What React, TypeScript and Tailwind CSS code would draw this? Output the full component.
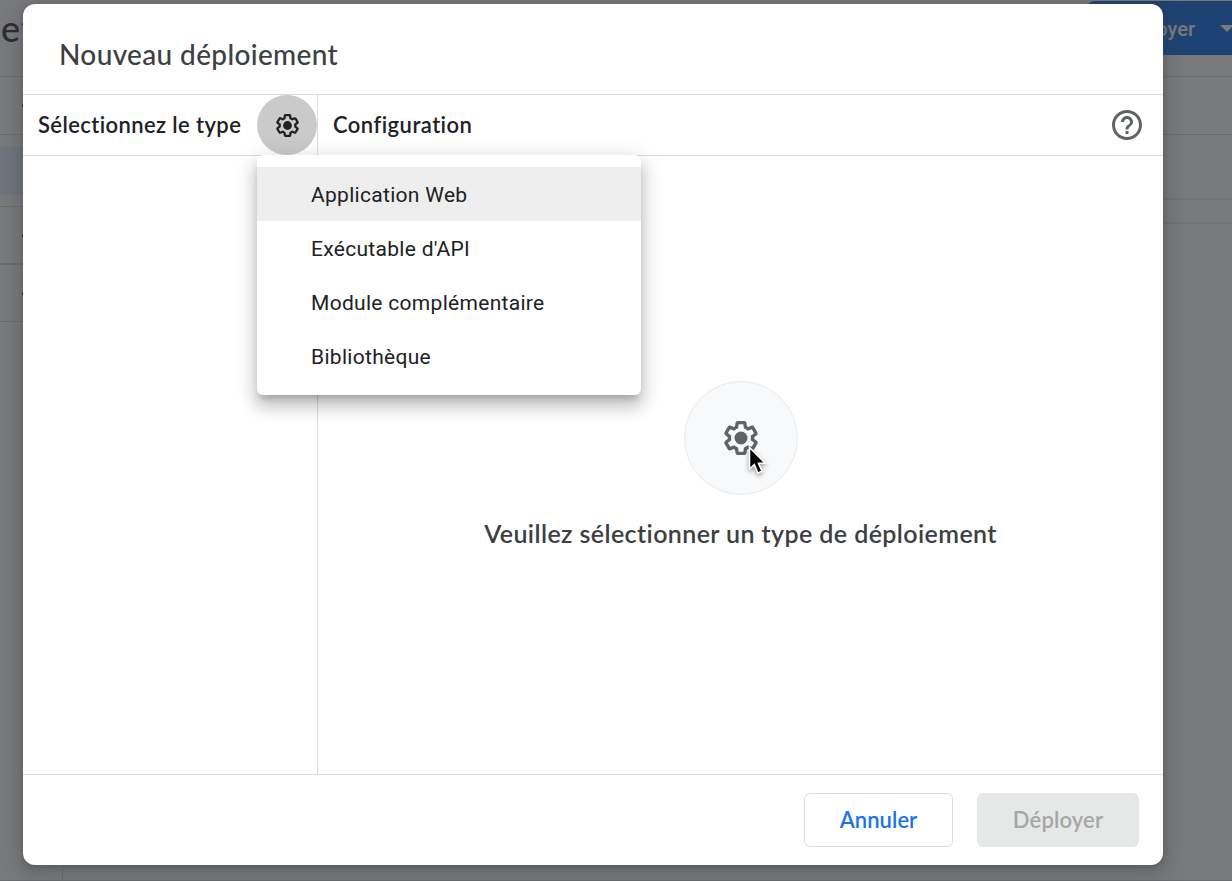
import React from "react";

const sans = "font-['Lato','Open_Sans',sans-serif]";

function GearIcon({ className }: { className: string }) {
  return (
    <svg viewBox="0 0 24 24" fill="currentColor" className={className} aria-hidden="true">
      <path d="M13.85 22.25h-3.7c-.74 0-1.36-.54-1.45-1.27l-.27-1.89c-.27-.14-.53-.29-.79-.46l-1.8.72c-.7.26-1.47-.03-1.81-.65L2.2 15.53c-.35-.66-.2-1.44.36-1.88l1.53-1.19c-.01-.15-.02-.3-.02-.46 0-.15.01-.31.02-.46l-1.52-1.19c-.59-.45-.74-1.26-.37-1.88l1.85-3.19c.34-.62 1.11-.9 1.79-.63l1.81.73c.26-.17.52-.32.78-.46l.27-1.91c.09-.7.71-1.25 1.44-1.25h3.7c.74 0 1.36.54 1.45 1.27l.27 1.89c.27.14.53.29.79.46l1.8-.72c.71-.26 1.48.03 1.82.65l1.84 3.18c.36.66.2 1.44-.36 1.88l-1.52 1.19c.01.15.02.3.02.46s-.01.31-.02.46l1.52 1.19c.56.45.72 1.23.37 1.86l-1.86 3.22c-.34.62-1.11.9-1.8.63l-1.8-.72c-.26.17-.52.32-.78.46l-.27 1.91c-.1.68-.72 1.22-1.46 1.22zm-3.23-2h2.76l.37-2.55.53-.22c.44-.18.88-.44 1.34-.78l.45-.34 2.38.96 1.38-2.4-2.03-1.58.07-.56c.03-.26.06-.51.06-.78s-.03-.53-.06-.78l-.07-.56 2.03-1.58-1.39-2.4-2.39.96-.45-.35c-.42-.32-.87-.58-1.33-.77l-.52-.22-.37-2.55h-2.76l-.37 2.55-.53.21c-.44.19-.88.44-1.34.79l-.45.33-2.38-.95-1.39 2.39 2.03 1.58-.07.56a7 7 0 0 0-.06.79c0 .26.02.53.06.78l.07.56-2.03 1.58 1.38 2.4 2.39-.96.45.35c.43.33.86.58 1.33.77l.53.22.38 2.55z" />
      <circle cx="12" cy="12" r="3.9" />
    </svg>
  );
}

function HelpIcon() {
  return (
    <svg viewBox="0 0 24 24" fill="currentColor" className="size-9 text-[#5f6368]" aria-hidden="true">
      <path d="M11 18h2v-2h-2v2zm1-16C6.48 2 2 6.48 2 12s4.48 10 10 10 10-4.48 10-10S17.52 2 12 2zm0 18c-4.41 0-8-3.59-8-8s3.59-8 8-8 8 3.59 8 8-3.59 8-8 8zm0-14c-2.21 0-4 1.79-4 4h2c0-1.1.9-2 2-2s2 .9 2 2c0 2-3 1.75-3 5h2c0-2.25 3-2.5 3-5 0-2.21-1.79-4-4-4z" />
    </svg>
  );
}

function Cursor() {
  return (
    <svg viewBox="0 0 20 30" className="absolute top-[65px] left-[63px] h-[30px] w-5 overflow-visible drop-shadow-[0_2px_2px_rgba(0,0,0,0.4)]" aria-hidden="true">
      <path d="M1.5 0.5V22L6.3 17.6L9.9 26L14 24.2L10.5 16.2H17.2Z" fill="#000" stroke="#fff" strokeWidth="1.6" />
    </svg>
  );
}

function Tick() {
  return <span className="h-[3px] w-px rounded-full bg-[#3c2a24]" />;
}

function Backdrop() {
  return (
    <div className="flex h-full flex-col bg-white">
      <div className="flex h-[77px] items-start justify-between border-b border-[#dadce0] pt-px">
        <span className={`${sans} pt-1.5 pl-px text-[36px] leading-[42px] font-medium tracking-[1px] text-[#3c4043]`}>et</span>
        <div className="flex h-[54px] w-[144px] items-center justify-end gap-[25px] rounded-tl-md bg-[#1a73e8] text-white">
          <span className="pt-0.5 font-['Roboto',sans-serif] text-[20px] font-medium">Déployer</span>
          <svg viewBox="0 0 12 7" className="h-[7px] w-3" fill="currentColor" aria-hidden="true">
            <path d="M0 0h14l-7 7z" />
          </svg>
        </div>
      </div>
      <div className="flex grow">
        <div className="flex w-[63px] flex-col border-r border-[#dadce0]">
          <div className="flex h-[58px] items-center border-b border-[#dadce0] pl-[22px]"><Tick /></div>
          <div className="h-[72px] border-b border-[#dadce0] pt-3"><div className="h-12 bg-[#e8f0fe]" /></div>
          <div className="flex h-[58px] items-center border-b-2 border-[#dadce0] pl-[22px]"><Tick /></div>
          <div className="flex h-[57px] items-center border-b border-[#dadce0] pl-[22px]"><Tick /></div>
          <div className="grow" />
        </div>
        <div className="flex grow flex-col">
          <div className="h-[58px] border-b border-[#dadce0]" />
          <div className="h-[65px] border-b-2 border-[#eceef0]" />
          <div className="h-6 border-b-2 border-[#eceef0]" />
          <div className="grow" />
        </div>
      </div>
      <div className="h-px bg-[#dadce0]" />
    </div>
  );
}

const types = ["Application Web", "Exécutable d'API", "Module complémentaire", "Bibliothèque"];

function TypeMenu() {
  return (
    <ul className="absolute top-[60px] left-0 z-10 w-[384px] rounded-md bg-white py-3 shadow-[0_7.5px_7.5px_-4.5px_rgba(0,0,0,0.2),0_12px_15px_1.5px_rgba(0,0,0,0.14),0_4.5px_21px_3px_rgba(0,0,0,0.12)]">
      {types.map((type, i) => (
        <li
          key={type}
          className={`flex h-[54px] items-center pt-1 pl-[54px] font-['Roboto',sans-serif] text-[21px] tracking-[0.3px] whitespace-nowrap text-[#202124] ${i === 0 ? "bg-[#eeeeee]" : ""}`}
        >
          {type}
        </li>
      ))}
    </ul>
  );
}

export default function App() {
  return (
    <div className="relative h-[881px] w-[1232px] overflow-hidden">
      <Backdrop />
      <div className="absolute inset-0 bg-[#202124]/60 pt-1 pl-[23px]">
        <div role="dialog" className={`${sans} flex h-[861px] w-[1140px] flex-col rounded-xl bg-white shadow-[0_1.5px_4.5px_rgba(60,64,67,0.3),0_6px_18px_4.5px_rgba(60,64,67,0.3)]`}>
          <h1 className="flex h-[91px] items-center border-b border-[#dadce0] pt-2.5 pl-9 text-[28px] font-medium tracking-[0.35px] text-[#3c4043]">
            Nouveau déploiement
          </h1>
          <div className="flex grow">
            <section className="flex w-[295px] flex-col border-r border-[#dadce0]">
              <div className="flex h-[61px] items-center justify-between border-b border-[#dadce0] pl-[15px]">
                <h2 className="pb-0.5 text-[22px] font-semibold tracking-[0.4px] text-[#202124]">Sélectionnez le type</h2>
                <div className="relative">
                  <button className="flex size-[60px] items-center justify-center rounded-full bg-[#cacaca] text-[#202124]">
                    <GearIcon className="size-[27px]" />
                  </button>
                  <TypeMenu />
                </div>
              </div>
            </section>
            <section className="flex grow flex-col">
              <div className="flex h-[61px] items-center justify-between border-b border-[#dadce0] pr-[18px] pl-[15px]">
                <h2 className="pb-0.5 text-[22px] font-semibold tracking-[0.45px] text-[#202124]">Configuration</h2>
                <HelpIcon />
              </div>
              <div className="flex grow flex-col items-center pt-[225px]">
                <div className="relative flex size-[114px] items-center justify-center rounded-full border border-[#e8eaed] bg-[#f8f9fa] pl-px text-[#5f6368]">
                  <GearIcon className="size-10" />
                  <Cursor />
                </div>
                <p className="mt-5 text-[25px] leading-9 font-semibold tracking-[0.4px] text-[#3c4043]">
                  Veuillez sélectionner un type de déploiement
                </p>
              </div>
            </section>
          </div>
          <footer className="flex h-[91px] items-center justify-end gap-6 border-t border-[#dadce0] pr-6">
            <button className="h-[54px] w-[149px] rounded-md border border-[#dadce0] pb-0.5 text-[22px] font-semibold tracking-[0.05px] text-[#1a73e8]">Annuler</button>
            <button disabled className="h-[54px] w-[162px] rounded-md bg-[#e6e8e7] pb-0.5 text-[22px] font-semibold tracking-[0.15px] text-[#a5a7a7]">Déployer</button>
          </footer>
        </div>
      </div>
    </div>
  );
}
